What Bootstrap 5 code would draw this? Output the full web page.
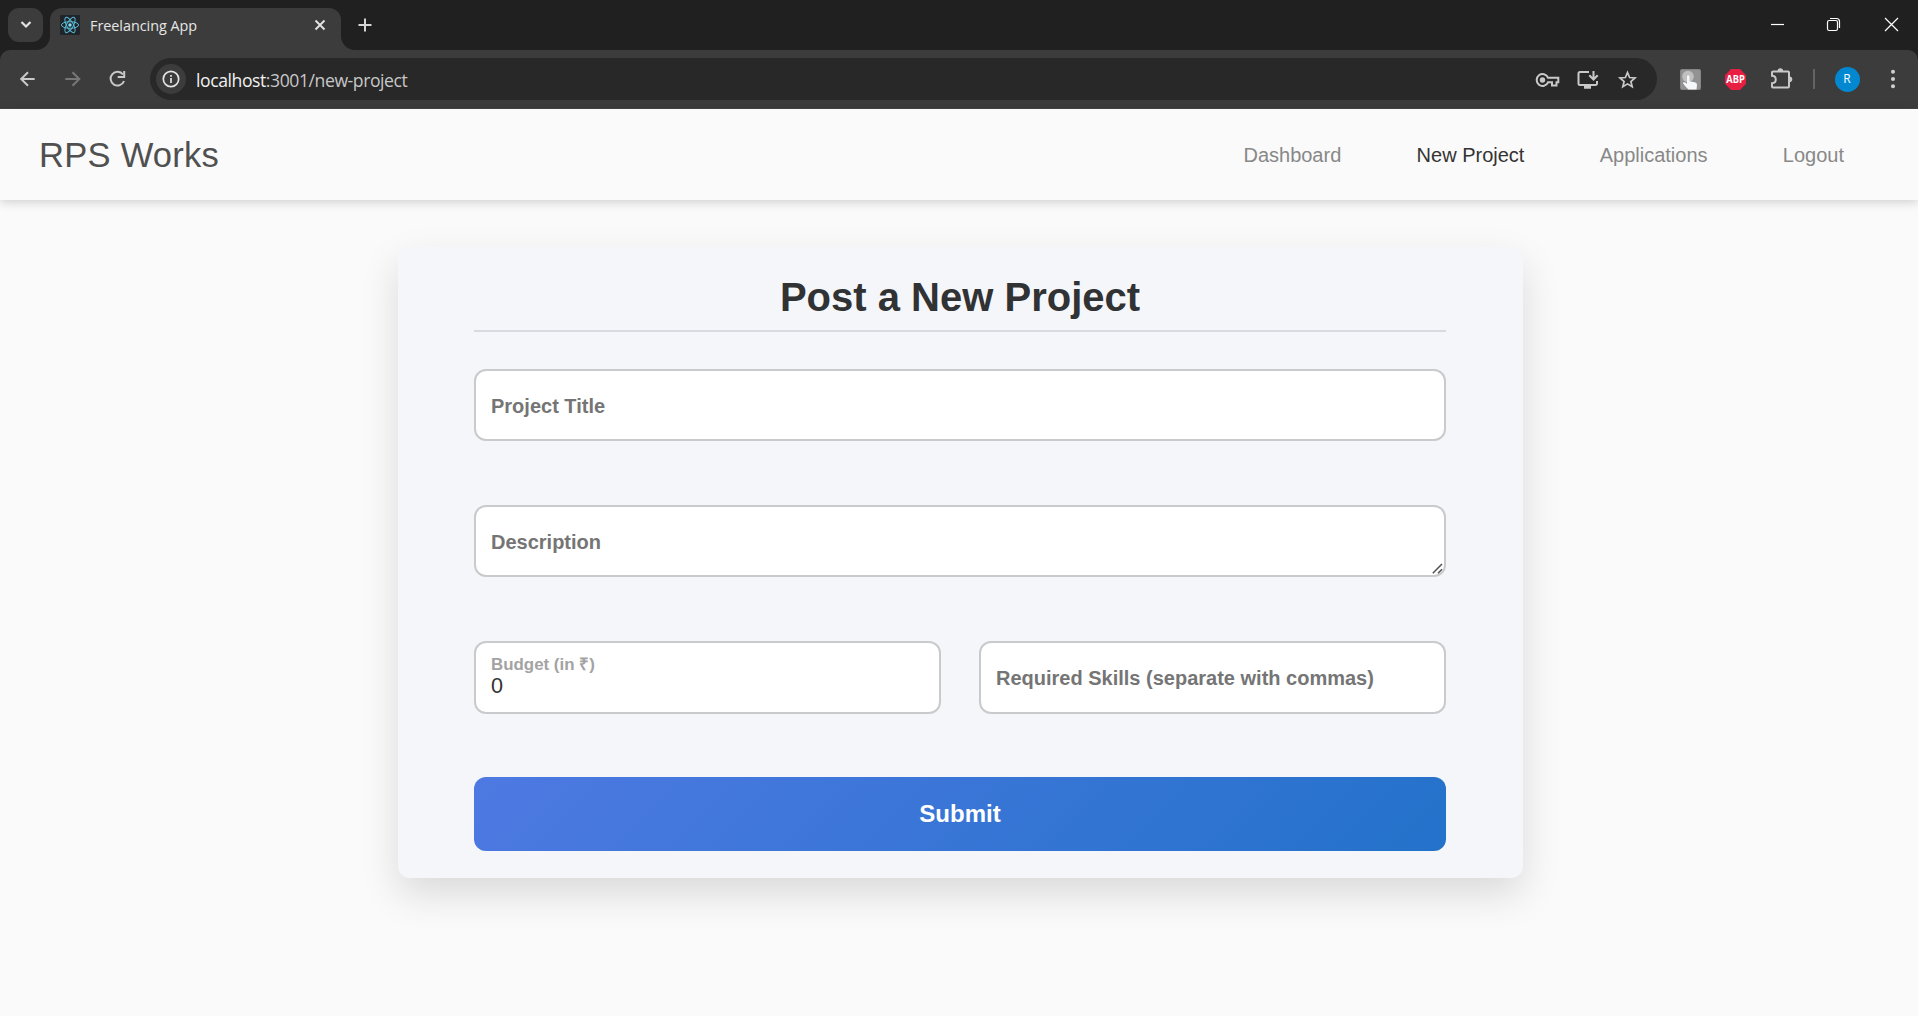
<!DOCTYPE html>
<html lang="en">
<head>
<meta charset="utf-8">
<title>Freelancing App</title>
<meta name="viewport" content="width=device-width, initial-scale=1">
<link href="https://cdn.jsdelivr.net/npm/bootstrap@5.3.0/dist/css/bootstrap.min.css" rel="stylesheet">
<style>
body{font-family:"Liberation Sans",Arial,sans-serif;background:#fafafa;height:100vh;overflow:hidden;color:#333}
svg{display:block;flex:none}
/* browser frame */
.chrome-ui{font-family:"Open Sans","Noto Sans",sans-serif}
.tab-strip{height:50px;background:#202020;padding:8px 0 0 8px}
.tab-search{width:35px;height:34px;border-radius:11px;background:#3c3c3c;margin-right:7px}
.app-tab{position:relative;width:291px;height:42px;background:#3c3c3c;border-radius:12px 12px 0 0;padding:0 15px 8px 10px}
.app-tab::before,.app-tab::after{content:"";position:absolute;bottom:0;width:14px;height:14px}
.app-tab::before{left:-14px;background:radial-gradient(circle at 0 0,transparent 13.5px,#3c3c3c 14.5px)}
.app-tab::after{right:-14px;background:radial-gradient(circle at 100% 0,transparent 13.5px,#3c3c3c 14.5px)}
.tab-title{font-size:14.4px;color:#e6e6e6;margin-left:10px;letter-spacing:-.03px;line-height:20px;padding-top:1px;white-space:nowrap}
.tool-wrap{background:#202020}
.tool-strip{height:59px;background:#3c3c3c;border-radius:10px 10px 0 0;border-bottom:1px solid #464646;padding:8px 17px 0 16px}
.address{height:42px;width:1507px;border-radius:21px;background:#282828;padding:0 16px 0 6px;margin-left:21px}
.site-info{width:30px;height:30px;border-radius:50%;background:#3c3c3c}
.url-text{font-size:17.6px;color:#c7c7c7;margin-left:10px;letter-spacing:-.43px;line-height:26px;padding-top:1px;white-space:nowrap}
.url-text b{font-weight:400;color:#f1f1f1}
.tool-end{height:42px}
.avatar-r{width:25px;height:25px;border-radius:50%;background:#0288d1;color:#fff;font-size:12px;margin-left:20px}
.split{width:1.5px;height:20px;background:#646464;margin-left:20px}
.menu-dots{margin-left:30px}
.plus-icon{margin:9.500px 0 0 17px}
/* page */
.site-head{height:91px;padding:0 74px 0 39px;background:#fafafa;box-shadow:0 2px 10px rgba(0,0,0,.18);position:relative}
.brand-name{font-size:34.56px;color:#505050;line-height:1;letter-spacing:.25px;padding-top:1px}
.site-links{gap:75.300px}
.site-links .nav-link{padding:0;font-size:20px;color:#888}
.site-links .nav-link.active{color:#333}
.post-card{width:1125px;height:631px;margin:47px 0 0 398px;border:0;border-radius:12px;background:#f4f6fa;padding:27px 77px;box-shadow:0 16px 38px rgba(0,0,0,.13)}
.post-title{height:58px;font-size:40px;font-weight:700;line-height:46px;border-bottom:2px solid #d9dadf;margin:0 0 37px -1px;color:#303234}
.post-form{gap:64px;margin-left:-1px}
.field{height:72px;border:2px solid #c9cacc;border-radius:12px;background:#fff;padding:2px 14px 0 15px;font-size:20px;color:#333}
.field::placeholder{color:#757575;font-weight:700;opacity:1}
textarea.field{min-height:72px!important;line-height:24px;padding-top:23px;overflow:hidden;resize:none}
.grip{position:absolute;right:3px;bottom:3px}
.field-pair{gap:38px}
.field-pair .field{height:73px}
.small-label{font-size:16.900px;line-height:19px;font-weight:700;color:#a3a3a3;margin-top:10px}
.plain-value{border:0;padding:0;font-size:21.6px;line-height:24px;height:24px;color:#333;background:transparent;width:100%}
.submit-btn{height:74px;margin-top:-1px;border:0;border-radius:12px;font-weight:700;font-size:24px;color:#fff;background:linear-gradient(135deg,#4e79e2,#2372ca)}
</style>
<script src="https://cdn.jsdelivr.net/npm/bootstrap@5.3.0/dist/js/bootstrap.bundle.min.js"></script>
</head>
<body>
<div class="chrome-ui">
  <div class="tab-strip d-flex">
    <div class="tab-search d-flex align-items-center justify-content-center">
      <svg width="12" height="10" viewBox="0 0 12 10" fill="none" stroke="#e3e3e3" stroke-width="2.2"><path d="M1.5 2 6 6.5 10.5 2"/></svg>
    </div>
    <div class="app-tab d-flex align-items-center">
      <svg width="20" height="20" viewBox="0 0 20 20"><rect width="20" height="20" rx="1" fill="#20252b"/><g fill="none" stroke="#58b9d2" stroke-width="1"><ellipse cx="10" cy="10" rx="8.6" ry="3.3"/><ellipse cx="10" cy="10" rx="8.6" ry="3.3" transform="rotate(60 10 10)"/><ellipse cx="10" cy="10" rx="8.6" ry="3.3" transform="rotate(120 10 10)"/></g><circle cx="10" cy="10" r="1.7" fill="#7fe0f5"/></svg>
      <span class="tab-title">Freelancing App</span>
      <svg class="ms-auto" width="12" height="12" viewBox="0 0 12 12" stroke="#e3e3e3" stroke-width="1.9"><path d="M1.5 1.5l9 9M10.500 1.500l-9 9"/></svg>
    </div>
    <svg class="plus-icon" width="14" height="14" viewBox="0 0 14 14" stroke="#d6d6d6" stroke-width="2"><path d="M7 .5v13M.5 7h13"/></svg>
    <svg class="ms-auto" width="147" height="34" viewBox="1771 8 147 34" fill="none" stroke="#fff" stroke-width="1.2"><path d="M1771 24.500h13"/><rect x="1827.500" y="20.500" width="10" height="10" rx="1.800"/><path d="M1830 18.500h6.500a3 3 0 0 1 3 3v6.500"/><path d="M1885 18l13 13M1898 18l-13 13"/></svg>
  </div>
  <div class="tool-wrap">
    <div class="tool-strip d-flex">
      <svg width="113" height="42" viewBox="16 58 113 42" fill="none" stroke="#c9c9c9" stroke-width="2"><path d="M34.700 79H21.500M28 72.200 21.200 79l6.800 6.800"/><path stroke="#777" d="M65.300 79h13.200M72.500 72.200l6.800 6.800-6.800 6.800"/><path d="M123 74.500A6.900 6.900 0 1 0 124 81"/><path d="M124.200 71v6h-6.500"/></svg>
      <div class="address d-flex align-items-center">
        <div class="site-info d-flex align-items-center justify-content-center">
          <svg width="18" height="18" viewBox="0 0 18 18" fill="none" stroke="#e3e3e3" stroke-width="1.700"><circle cx="9" cy="9" r="7.700"/><path d="M9 8v5M9 5v1.800"/></svg>
        </div>
        <span class="url-text"><b>localhost</b>:3001/new-project</span>
        <svg class="ms-auto" width="106" height="42" viewBox="1535 58 106 42" fill="none" stroke="#c9c9c9" stroke-width="2">
          <path d="M1548 77.700a5.900 5.900 0 1 0 0 4.600h4v3.300h4.500v-3.300h1.800v-4.600z"/><circle cx="1542.500" cy="80" r="1.700" fill="#c9c9c9"/>
          <path d="M1589 72h-9a1.500 1.500 0 0 0-1.500 1.500v10a1.500 1.500 0 0 0 1.500 1.500h15.500a1.500 1.500 0 0 0 1.500-1.500V81M1593.500 71v8M1589.300 75.300l4.200 4.200 4.200-4.200"/><path d="M1584 87h7" stroke-width="3.500"/>
          <path d="M1627.500 72.500l2.100 5 5.400.5-4.100 3.500 1.300 5.300-4.700-2.900-4.700 2.900 1.300-5.300-4.100-3.500 5.400-.5z" stroke-width="1.700"/>
        </svg>
      </div>
      <svg width="136" height="42" viewBox="1657 58 136 42">
        <rect x="1680" y="69" width="21" height="21" rx="2" fill="#858585"/><rect x="1681" y="70" width="19" height="19" rx="1" fill="#929292"/><circle cx="1688" cy="76.500" r="5.800" fill="#c0c0c0"/>
        <path d="M1687 76q1.500-1.500 2.500.3v5l6 1.200q1.700.5 1.500 2.500l-.5 4.500h-8l-3-3-2.700-3.500q.8-1.500 2.400-.4l1.800 1.200z" fill="#f4f8fb"/>
        <path d="M1731 69h9l6 6.200v8.600l-6 6.200h-9l-6-6.200v-8.600z" fill="#e91e43"/>
        <text x="1735.600" y="83.300" text-anchor="middle" font-family="Open Sans" font-weight="700" font-size="10.300" textLength="18.500" lengthAdjust="spacingAndGlyphs" fill="#fff">ABP</text>
        <path d="M1773 71.500h15a1 1 0 0 1 1 1v14a1 1 0 0 1-1 1h-15a1 1 0 0 1-1-1v-3.300c5-.2 5-7.200 0-7.400v-3.300a1 1 0 0 1 1-1z" fill="none" stroke="#c9c9c9" stroke-width="2"/><path d="M1777.500 71a2.800 2.800 0 0 1 5.600 0zM1789.500 76.500a2.800 2.800 0 0 1 0 5.600z" fill="#c9c9c9"/>
      </svg>
      <div class="tool-end d-flex align-items-center">
        <div class="split"></div>
        <div class="avatar-r d-flex align-items-center justify-content-center">R</div>
        <svg class="menu-dots" width="6" height="20" viewBox="0 0 6 20" fill="#d0d0d0"><circle cx="3" cy="2.800" r="2"/><circle cx="3" cy="10" r="2"/><circle cx="3" cy="17.200" r="2"/></svg>
      </div>
    </div>
  </div>
</div>
<header class="site-head d-flex align-items-center justify-content-between">
  <div class="brand-name">RPS Works</div>
  <nav class="site-links nav">
    <a class="nav-link" href="#">Dashboard</a>
    <a class="nav-link active" href="#">New Project</a>
    <a class="nav-link" href="#">Applications</a>
    <a class="nav-link" href="#">Logout</a>
  </nav>
</header>
<main class="post-card card">
  <h1 class="post-title text-center">Post a New Project</h1>
  <form class="post-form d-flex flex-column">
    <input class="field form-control" placeholder="Project Title">
    <div class="position-relative">
      <textarea class="field form-control d-block" rows="1" placeholder="Description"></textarea>
      <svg class="grip" width="11" height="11" viewBox="0 0 11 11" fill="none" stroke="#505050" stroke-width="1.500"><path d="M.8 10.200 10 1M6 10.200l4-4"/></svg>
    </div>
    <div class="field-pair d-flex">
      <div class="field form-control">
        <label class="small-label d-block" for="budget">Budget (in ₹)</label>
        <input class="plain-value d-block" id="budget" value="0">
      </div>
      <input class="field form-control" placeholder="Required Skills (separate with commas)">
    </div>
    <button class="submit-btn btn w-100" type="button">Submit</button>
  </form>
</main>
</body>
</html>
